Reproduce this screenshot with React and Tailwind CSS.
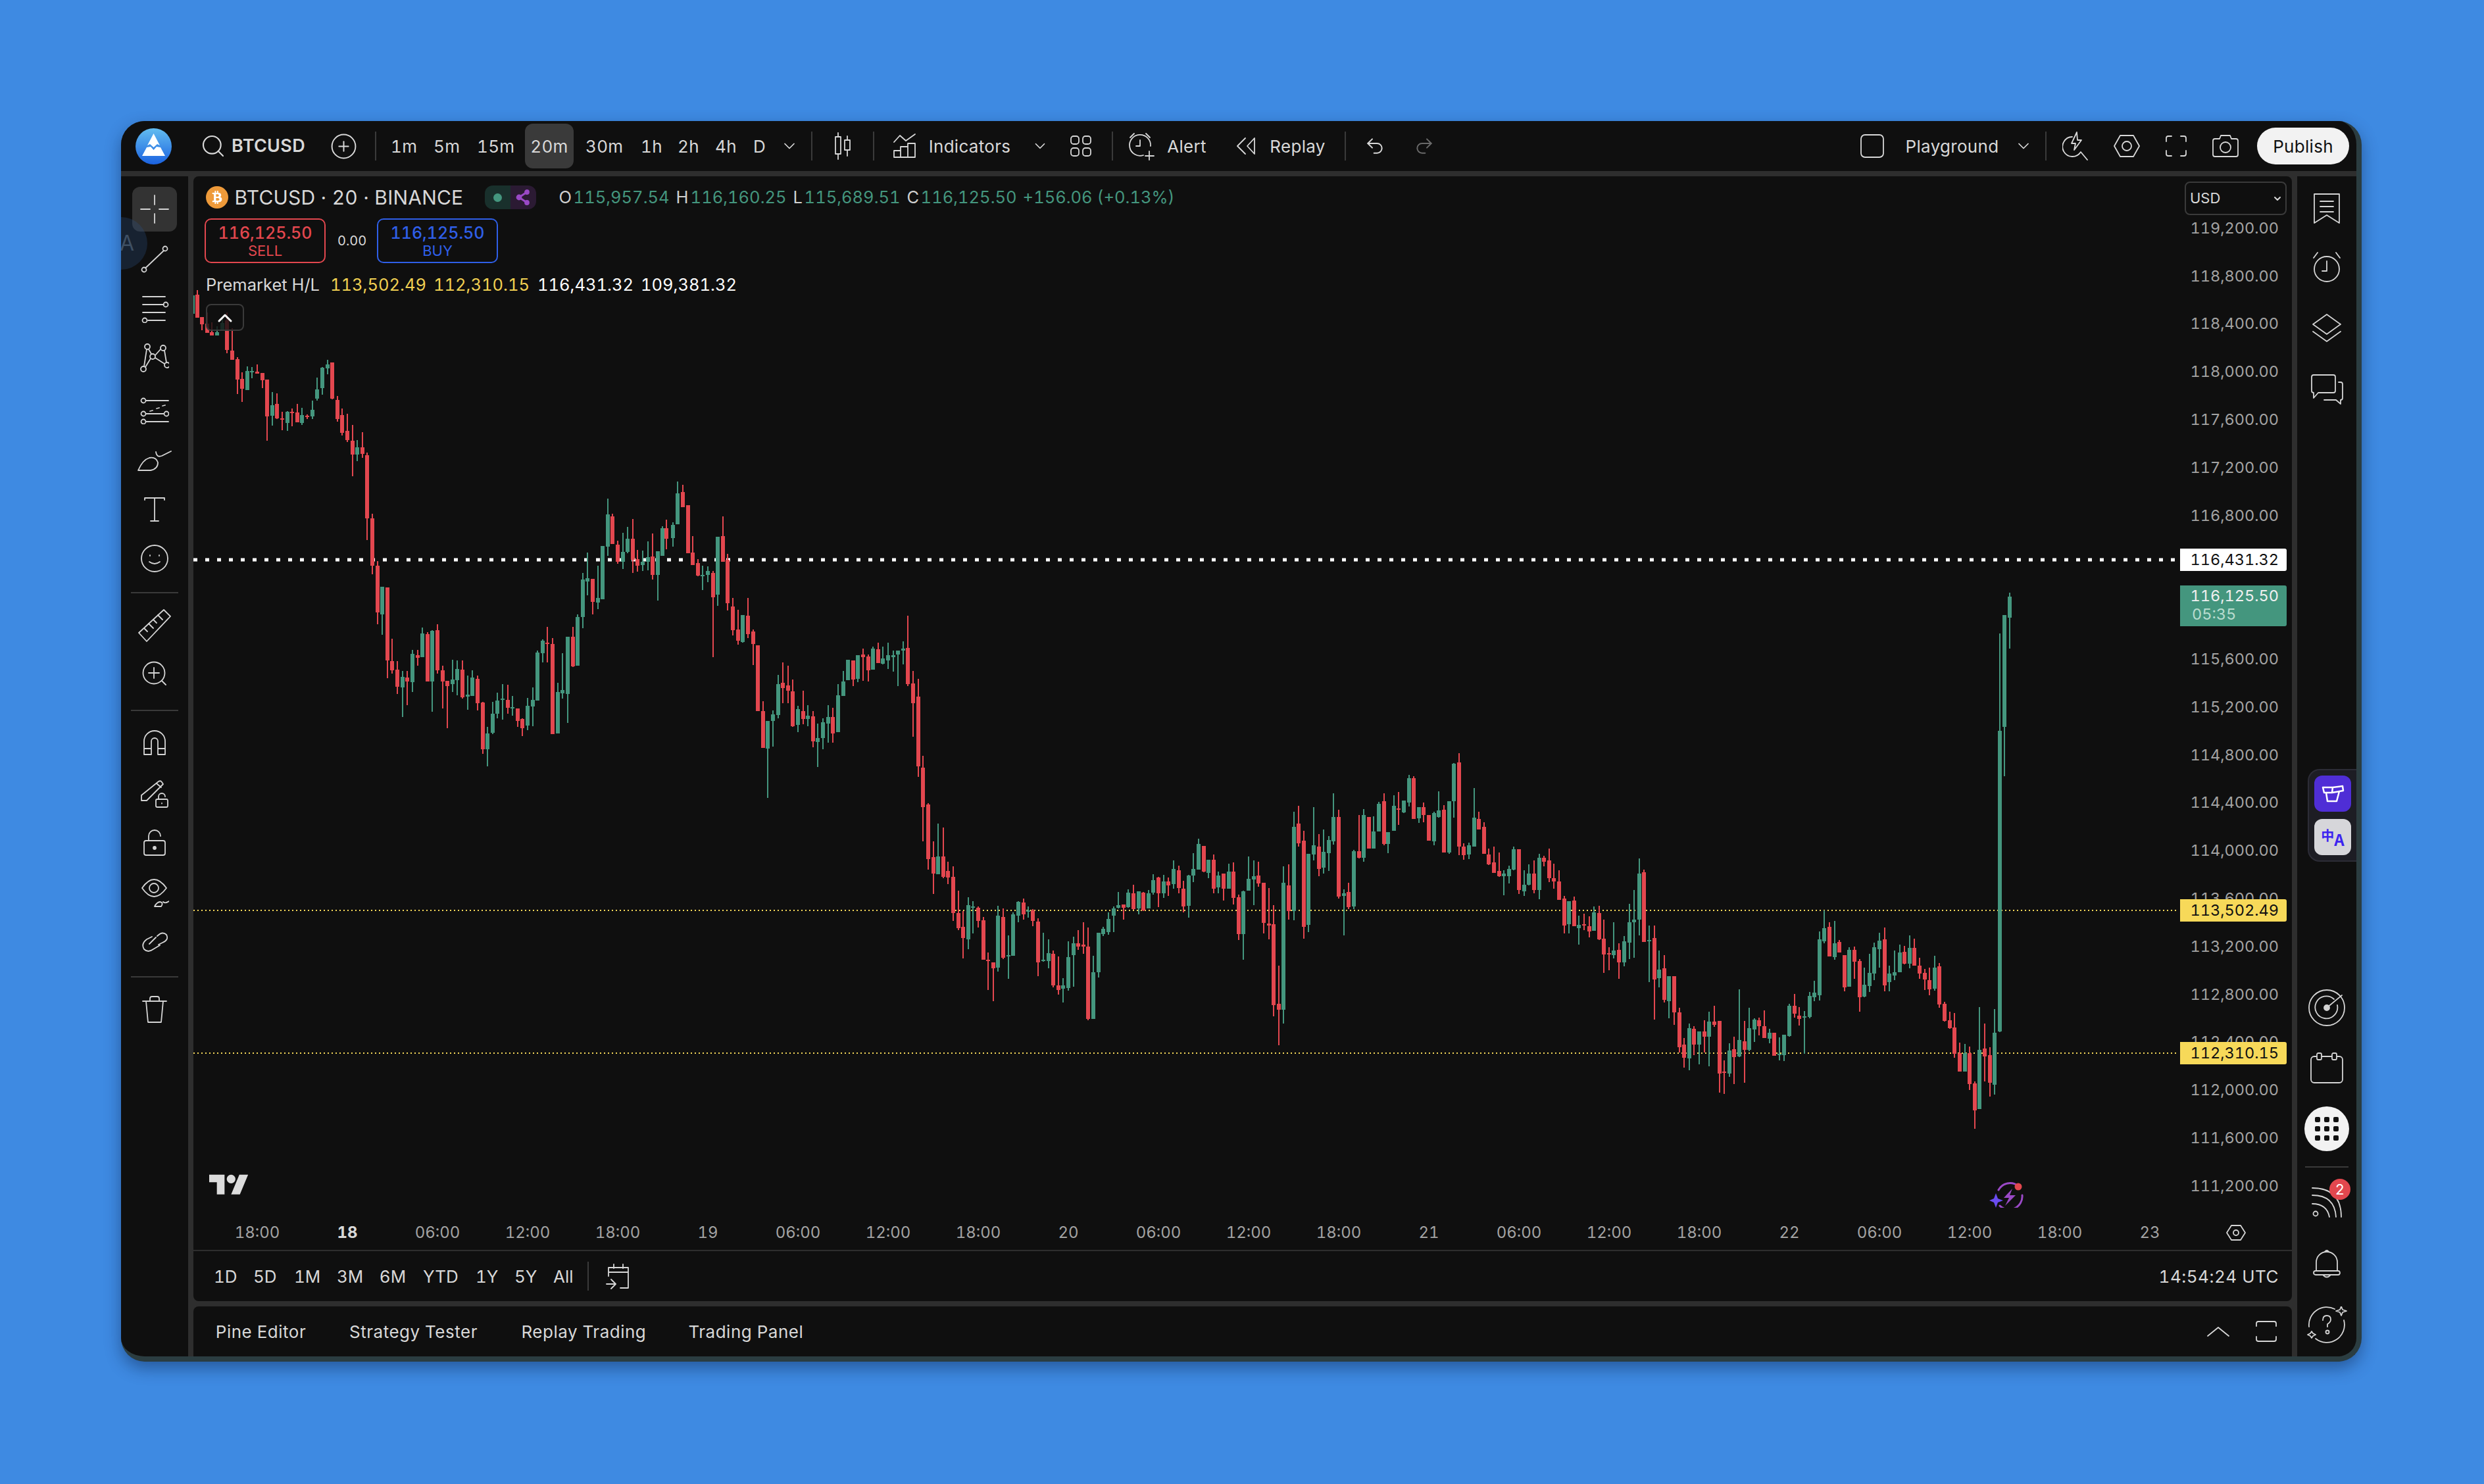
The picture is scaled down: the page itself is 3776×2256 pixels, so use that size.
import React from 'react';
import { FaBtc } from 'react-icons/fa';
import { Search, CirclePlus, Undo2, Redo2, ChevronDown } from 'lucide-react';

// candle readings: [x, green, bodyTop, bodyBottom, high, low], in the units of each crop
const segments = [
  { x0: 294, y0: 440, sx: 2.178, sy: 2.119, rows: [
    [-3,1,20,78,15,78],[13,0,18,91,3,91],[28,0,89,112,89,131],[45,0,110,139,75,140],[61,0,138,148,105,148],[78,1,137,148,118,148],[95,1,108,130,95,130],[111,0,100,195,75,206],[128,0,197,227,125,227],[145,0,225,290,218,337],[161,0,288,320,267,362],[178,1,263,324,247,324],[194,1,262,265,251,286],[211,0,264,271,242,271],[228,0,269,292,269,318],[244,0,290,409,290,487],[261,1,373,407,331,439],[276,0,369,416,335,417],[294,0,416,419,394,453],[311,1,395,430,391,456],[326,0,394,397,384,441],[344,0,396,428,369,428],[360,1,405,431,381,436],[377,0,406,409,403,417],[394,1,388,409,358,417],[410,1,322,352,284,358],[427,1,252,318,250,339],[444,1,242,254,227,273],[460,0,235,352,235,354],[476,0,356,417,343,426],[492,0,405,462,384,470],[509,0,456,485,400,492],[527,0,487,531,436,602],[542,1,509,531,486,553],[559,0,509,530,460,542],[575,0,534,737,525,807],[592,0,737,890,723,917],[609,0,890,1040,876,1079],[625,1,958,1047,958,1112],[642,0,960,1195,960,1252],[658,0,1197,1227,1125,1237],[675,0,1225,1280,1197,1303],[692,1,1248,1282,1228,1377],[707,0,1250,1263,1228,1339],[725,1,1174,1265,1162,1297],[742,0,1178,1187,1162,1212],[758,1,1108,1184,1090,1184],[775,0,1110,1263,1105,1263],[791,1,1100,1263,1098,1360],[807,0,1098,1227,1079,1237],[825,0,1227,1263,1212,1350],[840,0,1261,1278,1261,1413],[858,1,1257,1272,1193,1297],[874,1,1223,1259,1195,1308],[890,0,1225,1314,1195,1317],[908,1,1305,1311,1244,1354],[923,1,1250,1309,1226,1309],[940,0,1254,1333,1244,1356],[958,0,1331,1481,1329,1496],[973,1,1430,1481,1410,1536],[990,1,1367,1428,1329,1432],[1006,1,1324,1366,1300,1382],[1023,1,1318,1322,1272,1386],[1041,0,1322,1348,1273,1367],[1056,1,1346,1350,1310,1373],[1073,0,1350,1390,1350,1409],[1089,0,1384,1413,1382,1439],[1106,1,1341,1405,1315,1420],[1123,1,1322,1343,1283,1406],[1139,1,1170,1324,1164,1324],[1156,1,1132,1172,1127,1201],[1171,0,1138,1143,1088,1201],[1189,0,1142,1432,1123,1432],[1206,1,1297,1430,1268,1430],[1221,1,1290,1301,1171,1318],[1239,1,1119,1303,1119,1397],[1256,0,1119,1214,1086,1216],[1271,1,1055,1212,1046,1212],[1289,1,934,1055,913,1091],[1304,1,930,941,848,985],[1322,0,932,1006,932,1047],[1339,1,994,1009,890,1030],[1354,1,826,998,826,998],[1372,1,725,828,674,858],[1387,0,731,820,723,820],[1404,0,822,877,809,884],[1422,1,845,877,784,901],[1437,1,803,845,766,850],[1454,0,803,870,740,913],[1470,0,869,890,839,909],[1487,1,877,887,841,907],[1504,1,862,877,812,905],[1520,0,860,920,786,934],[1537,1,843,920,843,1002],[1554,1,769,858,762,858],
  ] },
  { x0: 1014, y0: 720, sx: 2.178, sy: 1.823, rows: [
    [-2,0,151,180,128,210],[19,1,142,179,135,202],[35,1,55,140,22,140],[52,0,51,93,31,93],[69,0,88,221,88,221],[85,0,219,253,173,253],[102,0,248,283,237,284],[118,1,281,284,255,323],[135,1,270,281,257,301],[152,0,275,343,270,509],[168,1,175,335,175,366],[185,0,173,244,119,244],[201,0,238,359,222,379],[218,0,368,434,344,449],[235,0,432,463,377,474],[251,1,392,467,392,468],[268,0,394,445,344,456],[285,0,438,472,432,531],[301,0,476,658,476,658],[318,0,658,760,631,760],[333,1,686,762,686,899],[351,1,667,686,656,757],[368,1,583,669,558,678],[383,0,580,594,523,636],[400,0,587,602,532,636],[416,0,603,700,570,702],[433,1,653,696,644,717],[451,0,658,680,602,695],[466,1,671,680,642,700],[483,0,673,742,658,758],[499,1,733,744,693,813],[516,1,689,733,678,764],[533,1,675,693,642,746],[549,0,675,720,649,746],[566,1,614,717,583,717],[583,1,576,616,547,616],[598,1,516,573,516,573],[616,0,518,571,518,589],[631,1,503,569,503,578],[649,0,501,509,485,574],[666,0,507,545,501,576],[681,1,485,543,480,543],[699,0,487,525,469,525],[714,1,512,527,480,529],[731,1,503,518,469,542],[749,1,503,509,490,549],[764,1,490,501,490,589],[781,1,485,491,465,529],[797,0,483,583,394,589],[814,0,582,636,547,729],[831,0,618,811,569,841],[847,0,815,924,782,1019],[864,0,917,1068,913,1098],[882,0,1063,1109,1019,1165],[897,1,1061,1110,970,1110],[914,0,1061,1117,981,1121],[929,0,1101,1119,1075,1138],[947,0,1118,1218,1089,1240],[964,0,1218,1260,1156,1265],[980,0,1256,1287,1212,1344],[997,1,1196,1291,1174,1318],[1012,1,1200,1203,1185,1274],[1030,0,1203,1240,1200,1258],[1047,0,1238,1347,1229,1347],[1063,0,1347,1351,1327,1431],[1080,0,1355,1371,1355,1462],[1095,1,1225,1369,1198,1380],[1112,0,1229,1342,1205,1346],[1130,1,1334,1338,1280,1400],[1145,1,1222,1336,1216,1336],[1162,1,1187,1225,1185,1243],[1180,0,1189,1222,1178,1236],[1195,1,1211,1215,1200,1231],[1212,0,1211,1240,1207,1254],[1228,0,1242,1355,1233,1393],[1245,1,1347,1351,1273,1353],[1263,1,1329,1351,1291,1371],[1278,0,1331,1418,1322,1424],[1295,0,1418,1431,1338,1444],[1311,1,1418,1427,1398,1466],[1328,1,1340,1426,1296,1433],[1345,1,1302,1335,1284,1422],[1361,0,1302,1311,1265,1320],[1378,0,1305,1311,1244,1331],[1393,0,1311,1511,1258,1515],[1411,1,1382,1511,1336,1511],[1428,1,1273,1382,1273,1397],[1443,1,1262,1276,1256,1282],[1461,1,1234,1271,1216,1278],[1478,1,1205,1225,1199,1271],[1494,1,1196,1203,1160,1205],[1511,0,1194,1203,1194,1236],[1526,1,1161,1202,1152,1203],[1544,0,1163,1207,1140,1209],[1561,1,1158,1205,1158,1222],
  ] },
  { x0: 1734, y0: 1120, sx: 2.178, sy: 3, rows: [
    [8,0,711,792,708,794],[26,1,714,783,699,783],[41,1,654,711,627,720],[59,0,642,714,639,777],[76,1,660,714,630,735],[91,0,660,678,642,726],[108,1,603,672,564,693],[126,0,609,690,588,714],[141,0,693,774,657,801],[159,1,633,771,630,825],[174,1,603,633,531,663],[191,1,489,606,465,606],[209,0,498,615,498,618],[224,1,561,621,561,645],[241,0,561,693,537,714],[257,1,633,687,615,714],[274,0,624,693,624,747],[291,1,615,693,579,693],[307,0,615,735,573,765],[324,0,732,900,720,927],[340,1,705,900,702,1017],[357,1,648,702,546,702],[374,1,636,651,564,768],[389,0,633,669,570,684],[407,0,666,849,666,897],[424,0,852,861,690,924],[439,0,855,1224,768,1275],[457,0,1218,1245,1044,1407],[472,1,666,1245,591,1308],[490,0,678,795,582,834],[507,1,411,795,342,837],[522,0,396,486,315,501],[540,0,474,867,429,921],[555,1,534,858,534,891],[572,1,495,537,321,564],[590,0,501,603,444,636],[605,1,525,597,423,624],[622,1,471,531,453,612],[638,1,366,477,258,492],[655,0,366,729,333,738],[672,1,714,726,696,906],[688,0,708,777,666,786],[705,1,522,774,516,786],[723,0,522,552,357,555],[738,1,357,552,330,570],[755,0,366,510,366,510],[770,1,432,510,363,510],[788,1,306,432,297,432],[805,0,294,489,258,495],[820,1,435,489,435,531],[838,1,315,429,267,429],[853,0,327,333,252,402],[871,1,291,345,291,348],[888,1,189,300,174,318],[903,0,189,375,180,375],[921,1,321,372,321,393],[936,0,321,357,300,390],[953,0,357,474,357,474],[971,1,348,477,342,495],[986,1,336,366,249,369],[1003,0,333,528,312,528],[1021,1,294,528,294,534],[1036,1,123,294,120,369],[1054,0,117,501,75,540],[1069,0,501,540,486,561],[1086,1,495,537,483,558],[1104,1,369,501,234,501],[1119,0,375,423,342,423],[1136,0,411,534,390,534],[1152,0,537,582,510,585],[1169,0,573,621,501,621],[1186,0,612,636,528,639],[1202,1,624,636,609,723],[1219,1,603,636,588,669],[1234,1,513,606,501,609],[1252,0,513,699,513,717],[1269,1,675,705,609,726],[1285,1,624,675,582,678],[1302,0,624,699,564,714],[1319,1,552,699,534,741],[1335,0,552,570,543,591],[1352,0,564,645,510,663],[1367,0,645,660,579,693],[1385,0,660,744,609,744],[1402,0,738,861,726,897],[1417,1,750,855,750,897],[1435,0,747,864,729,864],[1450,1,858,873,816,948],[1468,0,855,861,807,882],[1485,0,864,888,819,915],[1500,1,801,885,774,885],[1518,0,804,924,771,927],[1533,0,921,993,834,1077],[1550,0,987,993,960,1065],[1566,1,975,995,846,1011],
  ] },
  { x0: 2454, y0: 880, sx: 2.45, sy: 1.823, rows: [
    [17,0,1028,1063,1010,1109],[36,1,1005,1063,990,1074],[56,1,952,1008,901,1054],[73,1,945,951,862,1050],[93,1,817,944,775,988],[110,0,813,1006,806,1006],[129,1,1001,1004,961,1118],[149,0,995,1110,961,1222],[166,1,1083,1107,1030,1132],[186,0,1079,1167,1043,1174],[203,1,1101,1171,1101,1218],[223,0,1101,1202,1101,1236],[242,0,1202,1298,1189,1313],[259,0,1291,1327,1273,1355],[279,1,1245,1329,1233,1362],[296,0,1247,1291,1240,1320],[316,1,1254,1291,1254,1346],[335,0,1254,1269,1223,1312],[352,1,1227,1269,1200,1351],[372,0,1227,1236,1183,1241],[392,0,1225,1371,1225,1424],[409,0,1366,1369,1335,1427],[428,1,1307,1371,1287,1380],[445,0,1304,1326,1269,1400],[465,1,1278,1324,1138,1326],[485,0,1282,1305,1225,1397],[502,1,1245,1305,1189,1309],[521,1,1222,1249,1218,1284],[539,0,1223,1240,1216,1265],[558,0,1240,1273,1196,1273],[578,1,1258,1274,1247,1287],[596,0,1258,1322,1258,1322],[614,1,1316,1320,1271,1335],[632,1,1264,1320,1264,1336],[651,1,1183,1267,1178,1269],[671,0,1183,1205,1150,1216],[688,0,1211,1220,1187,1238],[708,1,1212,1216,1198,1316],[727,1,1156,1215,1145,1218],[744,1,1147,1160,1114,1171],[764,1,999,1154,977,1169],[781,1,968,1005,918,1010],[801,0,965,1047,952,1047],[820,1,1010,1049,948,1056],[838,0,1006,1035,1001,1036],[857,0,1043,1132,1043,1143],[875,1,1028,1130,1021,1130],[894,0,1028,1061,1019,1109],[913,0,1060,1160,1054,1200],[931,1,1125,1157,1078,1160],[950,1,1092,1129,1039,1145],[967,1,1021,1094,1008,1112],[987,1,1003,1027,981,1078],[1006,0,999,1127,966,1143],[1024,1,1094,1118,1072,1143],[1043,1,1090,1100,1030,1112],[1063,1,1036,1090,1014,1090],[1080,0,1034,1067,1017,1069],[1100,1,1023,1067,988,1079],[1117,0,1023,1072,997,1072],[1136,0,1072,1094,1050,1109],[1156,0,1092,1110,1081,1140],[1173,0,1112,1138,1078,1154],[1193,1,1078,1136,1045,1141],[1210,0,1074,1180,1065,1189],[1230,0,1178,1225,1172,1227],[1249,0,1223,1245,1200,1247],[1266,0,1243,1316,1203,1327],[1286,0,1314,1366,1285,1366],[1305,1,1314,1366,1289,1366],[1323,0,1314,1400,1296,1417],[1342,0,1398,1473,1393,1524],[1359,1,1305,1470,1187,1470],[1379,0,1302,1324,1233,1393],[1399,0,1320,1397,1298,1435],[1416,1,1258,1402,1192,1429],[1435,1,421,1254,151,1256],[1452,1,100,410,100,547],[1472,1,49,108,38,193],
  ] },
];

const candles = segments.flatMap((s) =>
  s.rows.map(([cx, up, top, bot, hi, lo]) => ({
    x: Math.round(s.x0 + cx / s.sx),
    up,
    top: s.y0 + top / s.sy,
    bot: s.y0 + bot / s.sy,
    hi: s.y0 + hi / s.sy,
    lo: s.y0 + lo / s.sy,
  }))
);

const prices = ['119,200.00','118,800.00','118,400.00','118,000.00','117,600.00','117,200.00','116,800.00','116,400.00','116,000.00','115,600.00','115,200.00','114,800.00','114,400.00','114,000.00','113,600.00','113,200.00','112,800.00','112,400.00','112,000.00','111,600.00','111,200.00'];
const times = ['18:00','18','06:00','12:00','18:00','19','06:00','12:00','18:00','20','06:00','12:00','18:00','21','06:00','12:00','18:00','22','06:00','12:00','18:00','23'];

const Ico = ({ w = 44, h = 44, sw = 1.8, className = '', children }) => (
  <svg width={w} height={h} viewBox={`0 0 ${w} ${h}`} fill="none" stroke="currentColor" strokeWidth={sw} strokeLinecap="round" strokeLinejoin="round" className={`shrink-0 ${className}`}>
    {children}
  </svg>
);

const Sep = ({ className = '' }) => <div className={`h-[44px] w-[2px] shrink-0 bg-[#3a3a3a] ${className}`} />;
const Divider = ({ className }) => <div className={`h-[2px] w-[72px] bg-[#3a3a3a] ${className}`} />;

const Logo = () => (
  <svg width="55" height="55" viewBox="0 0 55 55" className="ml-[22px] shrink-0">
    <defs>
      <linearGradient id="logoFill" x1="0" y1="0" x2="0" y2="1">
        <stop offset="0" stopColor="#63bdf0" />
        <stop offset="1" stopColor="#1b62e0" />
      </linearGradient>
    </defs>
    <circle cx="27.5" cy="27.5" r="27.5" fill="url(#logoFill)" />
    <path d="M27.5 8 L37 26 L33 24 L27.5 29 L22 24 L18 26 Z" fill="#fff" />
    <path d="M17 29 L23 28 L27.5 33 L32 28 L38 29 L45 42 L10 42 Z" fill="#fff" />
  </svg>
);

const TopBar = () => (
  <div className="flex h-[76px] shrink-0 items-center whitespace-nowrap bg-[#0f0f0f] text-[26px] tracking-[0.3px] text-[#d8d8d8]">
    <Logo />
    <Search size={40} strokeWidth={1.3} className="ml-[43px] shrink-0" />
    <span className="ml-[7px] w-[114px] shrink-0 text-center text-[27px] font-semibold">BTCUSD</span>
    <CirclePlus size={43} strokeWidth={1.1} className="ml-[36px] shrink-0" />
    <Sep className="ml-[26px]" />
    <span className="ml-[22px] w-[39px] shrink-0 text-center">1m</span>
    <span className="ml-[26px] w-[39px] shrink-0 text-center">5m</span>
    <span className="ml-[27px] w-[57px] shrink-0 text-center">15m</span>
    <span className="ml-[16px] flex h-[68px] w-[74px] shrink-0 items-center justify-center rounded-[12px] bg-[#3a3a3a]">20m</span>
    <span className="ml-[18px] w-[57px] shrink-0 text-center">30m</span>
    <span className="ml-[27px] w-[30px] shrink-0 text-center">1h</span>
    <span className="ml-[26px] w-[31px] shrink-0 text-center">2h</span>
    <span className="ml-[26px] w-[32px] shrink-0 text-center">4h</span>
    <span className="ml-[26px] w-[18px] shrink-0 text-center">D</span>
    <ChevronDown size={28} strokeWidth={1.5} className="ml-[22.5px] shrink-0" />
    <Sep className="ml-[19.5px]" />
    <Ico w={30} h={42} className="ml-[31px]">
      <path d="M8 1V41M22 6V36" />
      <rect x="4" y="7" width="8" height="26" fill="#0f0f0f" />
      <rect x="18" y="12" width="8" height="15" fill="#0f0f0f" />
    </Ico>
    <Sep className="ml-[31px]" />
    <Ico w={36} h={38} className="ml-[28px]">
      <path d="M2 13 L11 3 L20 11 L34 1" />
      <path d="M2 36H34M2 36V26H12V36M12 36V20H23V36M23 36V15H34V36" />
    </Ico>
    <span className="ml-[18px] w-[126px] shrink-0 text-center">Indicators</span>
    <ChevronDown size={26} strokeWidth={1.6} className="ml-[31px] shrink-0" />
    <Ico w={34} h={34} className="ml-[32px]">
      <rect x="2" y="2" width="12" height="12" rx="4" />
      <rect x="20" y="2" width="12" height="12" rx="4" />
      <rect x="2" y="20" width="12" height="12" rx="4" />
      <rect x="20" y="20" width="12" height="12" rx="4" />
    </Ico>
    <Sep className="ml-[30px]" />
    <Ico w={44} h={44} className="ml-[22px]">
      <path d="M24 36 A16 16 0 1 1 35 22" />
      <path d="M19 13V22H13M4 9L10 3M34 9L28 3M33 30V43M27 37H40" />
    </Ico>
    <span className="ml-[16px] w-[60px] shrink-0 text-center">Alert</span>
    <Ico w={32} h={30} className="ml-[44px]">
      <path d="M15 3 L3 15 L15 27" />
      <path d="M29 3 L18 15 L29 27 Z" />
    </Ico>
    <span className="ml-[20px] w-[85px] shrink-0 text-center">Replay</span>
    <Sep className="ml-[29px]" />
    <Undo2 size={32} strokeWidth={1.5} className="ml-[28px] shrink-0" />
    <Redo2 size={32} strokeWidth={1.5} className="ml-[43px] shrink-0 text-[#6a6a6a]" />
    <Ico w={38} h={38} className="ml-[646px]">
      <rect x="2" y="2" width="34" height="34" rx="6" />
    </Ico>
    <span className="ml-[31px] w-[143px] shrink-0 text-center">Playground</span>
    <ChevronDown size={28} strokeWidth={1.5} className="ml-[23px] shrink-0" />
    <Sep className="ml-[19px]" />
    <Ico w={40} h={44} className="ml-[24px]">
      <path d="M15 8 A15 15 0 1 0 28 31 L38 43" />
      <path d="M22 1 L14 18 H20 L18 28 L29 13 H23 Z" />
    </Ico>
    <Ico w={42} h={36} className="ml-[37px]">
      <path d="M11 2H31L40 18L31 34H11L2 18Z" />
      <circle cx="21" cy="18" r="7" />
    </Ico>
    <Ico w={34} h={34} className="ml-[37px]">
      <path d="M2 10V5Q2 2 5 2H10M24 2H29Q32 2 32 5V10M32 24V29Q32 32 29 32H24M10 32H5Q2 32 2 29V24" />
    </Ico>
    <Ico w={42} h={36} className="ml-[37px]">
      <path d="M5 7H12L14 2H28L30 7H37Q40 7 40 10V31Q40 34 37 34H5Q2 34 2 31V10Q2 7 5 7Z" />
      <circle cx="21" cy="20" r="8" />
    </Ico>
    <span className="ml-[27px] flex h-[56px] w-[140px] shrink-0 items-center justify-center rounded-full bg-[#f2f2f2] text-[#111]">Publish</span>
  </div>
);

const LeftRail = () => (
  <div className="relative flex w-[102px] shrink-0 flex-col items-center overflow-hidden bg-[#0f0f0f] text-[#d4d4d4]">
    <div className="mt-[16px] flex h-[68px] w-[68px] items-center justify-center rounded-[12px] bg-[#333333]">
      <Ico>
        <path d="M22 1V15M22 29V43M1 22H15M29 22H43" />
      </Ico>
    </div>
    <Ico className="mt-[20px]">
      <circle cx="38" cy="6" r="3.5" /><circle cx="6" cy="38" r="3.5" /><path d="M36 9L8 35.5" />
    </Ico>
    <Ico className="mt-[31px]">
      <path d="M4 4H38M4 16H36M4 28H38M12 40H38" />
      <circle cx="39" cy="16" r="3.5" /><circle cx="7" cy="40" r="3.5" />
    </Ico>
    <Ico className="mt-[31px]">
      <circle cx="11" cy="5" r="4" /><circle cx="35" cy="7" r="4" /><circle cx="5" cy="39" r="4" /><circle cx="41" cy="33" r="4" /><circle cx="19" cy="20" r="4" />
      <path d="M13 9L17 16M31 9L23 18M10 9L6 35M37 11L40 29M23 22L37 31M16 23L8 36" />
    </Ico>
    <Ico className="mt-[35px]">
      <circle cx="5" cy="8" r="3.5" /><circle cx="5" cy="28" r="3.5" /><circle cx="5" cy="40" r="3.5" /><circle cx="40" cy="28" r="3.5" />
      <path d="M9 8H43M9 28H36M9 40H43" />
      <path d="M15 24L19 23M25 20L29 19M34 16L38 15" />
    </Ico>
    <Ico w={52} h={38} className="mt-[34px]">
      <path d="M1 36H20Q31 34 31 24Q28 15 18 17Q8 20 1 36Z" />
      <path d="M28 8Q29 17 37 14L51 7" />
    </Ico>
    <Ico className="mt-[35px]">
      <path d="M7 8V5H37V8M22 5V40M16 40H28" />
    </Ico>
    <Ico className="mt-[31px]">
      <circle cx="22" cy="22" r="20" />
      <path d="M14 27Q22 33 30 27M15 17V18M29 17V18" />
    </Ico>
    <Divider className="mt-[29px]" />
    <Ico w={50} h={50} className="mt-[24px]">
      <path d="M1 36L39 1L49 11L13 49Z" />
      <path d="M9 29L14 34M16 22L23 29M23 16L28 21M30 9L37 16" />
    </Ico>
    <Ico className="mt-[27px]">
      <circle cx="21" cy="20" r="16.5" />
      <path d="M13 20H29M21 12V28M33 32L39 38" />
    </Ico>
    <Divider className="mt-[32px]" />
    <Ico className="mt-[26px]">
      <path d="M6 40V20A16 16 0 0 1 38 20V40H27V20A5 5 0 0 0 17 20V40ZM6 31H17M27 31H38" />
    </Ico>
    <Ico className="mt-[34px]">
      <path d="M2 24L28 3Q31 1 33 4L35 7L10 32H2ZM2 24V32M25 6L32 12" />
      <rect x="24" y="30" width="18" height="12" rx="2" />
      <path d="M28 30V26A5 5 0 0 1 38 26M33 36V36.5" />
    </Ico>
    <Ico className="mt-[31px]">
      <rect x="6" y="18" width="32" height="22" rx="3" />
      <path d="M13 18V11A9 9 0 0 1 31 11" />
      <circle cx="22" cy="29" r="2" fill="currentColor" />
    </Ico>
    <Ico className="mt-[32px]">
      <path d="M3 14Q21 -12 40 14Q21 40 3 14Z" />
      <circle cx="21" cy="14" r="7" />
      <path d="M22 42H32Q36 36 30 35Q25 36 22 42ZM35 35Q38 38 44 34" />
    </Ico>
    <Ico className="mt-[31px]">
      <path d="M18 13L10 17Q1 24 6 32Q12 38 20 32L30 26M24 14L14 24M26 12Q34 4 40 10Q44 18 34 22L28 25" />
    </Ico>
    <Divider className="mt-[29px]" />
    <Ico className="mt-[27px]">
      <path d="M4 9H40M9 9L12 41H32L35 9M15 9V5Q15 2 18 2H26Q29 2 29 5V9" />
    </Ico>
    <div className="absolute left-[-40px] top-[62px] flex h-[80px] w-[80px] items-center justify-end rounded-full bg-[#2a5080]/30 pr-[20px] text-[32px] text-[#3e4f63]">A</div>
  </div>
);

const RightRail = () => (
  <div className="flex w-[90px] shrink-0 flex-col items-center bg-[#0f0f0f] text-[#d4d4d4]">
    <Ico w={48} h={48} className="mt-[25px]">
      <path d="M5 2H43V46L24 34L5 46ZM14 13H34M14 21H34M14 29H34" />
    </Ico>
    <Ico w={52} h={48} className="mt-[41px]">
      <circle cx="26" cy="27" r="19" />
      <path d="M26 15V30H19M6 10L12 2M46 10L40 2" />
    </Ico>
    <Ico w={48} h={48} className="mt-[45px]">
      <path d="M24 3L45 18L24 33L3 18Z" />
      <path d="M3 29L24 44L45 29" />
    </Ico>
    <Ico w={52} h={48} className="mt-[45px]">
      <path d="M3 5Q3 2 6 2H36Q39 2 39 5V26Q39 29 36 29H13L6 37V29Q3 29 3 26Z" />
      <path d="M44 13H47Q50 13 50 16V37Q50 40 47 40V46L40 40H22" />
    </Ico>
    <div className="mt-[553px] flex h-[141px] w-[74px] flex-col gap-[11px] self-end rounded-l-[18px] border-y-2 border-l-2 border-[#2c2c36] bg-[#1d1d24] py-[8px] pl-[8px] pr-[8px]">
      <div className="flex h-[56px] w-[56px] items-center justify-center rounded-[12px] bg-[#4f2ed6] text-white">
        <Ico w={36} h={30} sw={2.5}>
          <path d="M3 5H18L17 13H5ZM18 5L33 3L34 10L17 13M8 13L10 26H24L28 11" />
        </Ico>
      </div>
      <div className="flex h-[56px] w-[56px] items-center justify-center rounded-[12px] bg-[#d6d6da] font-['Noto_Sans_CJK_SC',sans-serif] font-bold leading-none text-[#3d24f0]">
        <span className="mb-[6px] text-[20px]">中</span><span className="mt-[6px] text-[24px]">A</span>
      </div>
    </div>
    <Ico w={58} h={58} className="mt-[192.5px]">
      <circle cx="29" cy="29" r="27" />
      <path d="M40 16A17 17 0 1 0 45 25" />
      <circle cx="29" cy="29" r="4" fill="currentColor" />
      <path d="M29 29L52 10" />
    </Ico>
    <Ico w={52} h={48} className="mt-[39.5px]">
      <rect x="2" y="6" width="48" height="40" rx="5" />
      <rect x="11" y="1" width="7" height="10" rx="2" fill="#0f0f0f" />
      <rect x="34" y="1" width="7" height="10" rx="2" fill="#0f0f0f" />
    </Ico>
    <div className="mt-[34px] flex h-[68px] w-[68px] items-center justify-center rounded-full bg-[#f2f2f2]">
      <div className="grid grid-cols-3 gap-[6px]">
        {Array.from({ length: 9 }).map((_, i) => (
          <div key={i} className="h-[8px] w-[8px] rounded-[2px] bg-[#111]" />
        ))}
      </div>
    </div>
    <div className="mt-[23px] h-[2px] w-[66px] bg-[#3a3a3a]" />
    <div className="relative mt-[28px] h-[48px] w-[48px]">
      <Ico w={48} h={48}>
        <circle cx="7" cy="42" r="3.5" />
        <path d="M2 27Q24 27 28 47M2 14Q36 14 38 47M2 3Q46 3 46 47" />
      </Ico>
      <span className="absolute left-[28px] top-[-11px] flex h-[32px] w-[32px] items-center justify-center rounded-full bg-[#e2474e] text-[22px] text-white">2</span>
    </div>
    <Ico w={44} h={48} className="mt-[47px]">
      <path d="M6 34V21A16 16 0 0 1 38 21V34" />
      <path d="M19 5Q22 1 25 5" />
      <rect x="2" y="34" width="40" height="6" rx="3" />
      <path d="M17 41Q22 46 27 41" />
    </Ico>
    <Ico w={62} h={56} className="mt-[40px]">
      <path d="M43 4A27 27 0 0 0 4 31M14 49A27 27 0 0 0 57 21" />
      <path d="M25 21Q25 14 31 14Q37 14 37 20Q37 24 32 27V31" />
      <circle cx="32" cy="39" r="2.5" />
      <path d="M53 0L55 5L61 7L55 9L53 14L51 9L45 7L51 5Z" />
      <path d="M8 38L10 41L14 43L10 45L8 48L6 45L2 43L6 41Z" />
    </Ico>
  </div>
);

const ChartCanvas = () => (
  <svg className="absolute left-0 top-0" width="3190" height="1568" viewBox="294 268 3190 1568" fill="none">
    <path d="M294 851H3312" stroke="#fff" strokeWidth="5" strokeDasharray="6 12" />
    <path d="M294 1384H3312M294 1601H3312" stroke="#f7d959" strokeWidth="2" strokeDasharray="2 4" />
    {candles.map((c, i) => {
      const color = c.up ? '#44967e' : '#e3474f';
      return (
        <g key={i} fill={color} shapeRendering="crispEdges">
          <rect x={c.x - 1} y={c.hi} width="2" height={Math.max(c.lo - c.hi, 2)} />
          <rect x={c.x - 3} y={c.top} width="6" height={Math.max(c.bot - c.top, 2)} />
        </g>
      );
    })}
    <path d="M14 22H7V11H0V4h14v18zM28 22h-8l7.5-18h8L28 22z" transform="translate(318 1779) scale(1.667)" fill="#dcdcdc" />
    <circle cx="351.3" cy="1792.3" r="6.6" fill="#dcdcdc" />
    <g transform="translate(3024 1797)">
      <path d="M14 12A20 20 0 0 1 44 6M50 20A20 20 0 0 1 16 36" stroke="#9a49c6" strokeWidth="3" strokeLinecap="round" />
      <path d="M35 10L22 24H30L24 36L40 20H31Z" fill="#9a49c6" />
      <path d="M10 17L13 25L21 28L13 31L10 39L7 31L0 28L7 25Z" fill="#6a4cf0" />
      <circle cx="44" cy="7" r="5.5" fill="#e2474e" />
    </g>
  </svg>
);

const Legend = () => (
  <div className="absolute left-[19px] top-[14px] flex flex-col whitespace-nowrap text-[25.5px] leading-[36px] text-[#d8d8d8]">
    <div className="flex h-[36px] items-center">
      <span className="flex h-[34px] w-[34px] shrink-0 items-center justify-center rounded-full bg-[#ee9a3a] text-white"><FaBtc size={20} /></span>
      <span className="ml-[9.6px] w-[348px] shrink-0 text-[30px] tracking-[0.2px]">BTCUSD · 20 · BINANCE</span>
      <div className="ml-[32px] flex h-[36px] w-[78px] shrink-0 overflow-hidden rounded-[12px]">
        <div className="flex flex-1 items-center justify-center bg-[#19302c]"><span className="h-[13px] w-[13px] rounded-full bg-[#44967e]" /></div>
        <div className="flex flex-1 items-center justify-center bg-[#2b1a33] text-[#9a49c6]">
          <Ico w={24} h={26}>
            <circle cx="18" cy="5" r="3" fill="currentColor" /><circle cx="18" cy="21" r="3" fill="currentColor" /><circle cx="6" cy="13" r="3.5" fill="currentColor" />
            <path d="M18 5L6 13L18 21" strokeWidth="3" />
          </Ico>
        </div>
      </div>
      <div className="ml-[35px] flex text-[#44967e]">
        <span className="w-[22px] text-[#d0d0d0]">O</span><span className="w-[142px]">115,957.54</span>
        <span className="ml-[14px] w-[22px] text-[#d0d0d0]">H</span><span className="w-[142px]">116,160.25</span>
        <span className="ml-[14px] w-[17px] text-[#d0d0d0]">L</span><span className="w-[142px]">115,689.51</span>
        <span className="ml-[14px] w-[21px] text-[#d0d0d0]">C</span><span className="w-[142px]">116,125.50</span>
        <span className="ml-[13px] w-[229px]">+156.06 (+0.13%)</span>
      </div>
    </div>
    <div className="ml-[-2px] mt-[14px] flex items-center">
      <div className="flex h-[68px] w-[184px] flex-col items-center justify-center rounded-[10px] border-2 border-[#e2474e] text-[#e2474e]">
        <span className="text-[25px] font-medium leading-[30px]">116,125.50</span>
        <span className="text-[22px] leading-[24px]">SELL</span>
      </div>
      <span className="ml-[18px] w-[42px] text-center text-[20px]">0.00</span>
      <div className="ml-[18px] flex h-[68px] w-[184px] flex-col items-center justify-center rounded-[10px] border-2 border-[#2f5fe8] text-[#2f5fe8]">
        <span className="text-[25px] font-medium leading-[30px]">116,125.50</span>
        <span className="text-[22px] leading-[24px]">BUY</span>
      </div>
    </div>
    <div className="mt-[15px] flex h-[36px] items-center">
      <span className="w-[172px]">Premarket H/L</span>
      <span className="ml-[17px] w-[144px] text-[#f0cf52]">113,502.49</span>
      <span className="ml-[13px] w-[143px] text-[#f0cf52]">112,310.15</span>
      <span className="ml-[15px] w-[142px] text-white">116,431.32</span>
      <span className="ml-[15px] w-[142px] text-white">109,381.32</span>
    </div>
    <div className="mt-[11px] flex h-[41px] w-[58px] items-center justify-center rounded-[8px] border-2 border-[#3a3a3a] bg-[#0f0f0fcc] text-white">
      <Ico w={24} h={16} sw={3}><path d="M3 13L12 4L21 13" /></Ico>
    </div>
  </div>
);

const PriceAxis = () => (
  <div className="relative ml-auto w-[172px] pt-[42px]">
    {prices.map((p) => (
      <div key={p} className="flex h-[72.8px] items-center justify-end pr-[20px] text-[23.5px] text-[#a3a3a3]">{p}</div>
    ))}
    <div className="absolute left-[9px] top-[8px] flex h-[51px] w-[155px] items-center justify-between rounded-[8px] border-2 border-[#3a3a3a] bg-[#0f0f0f] pl-[6px] pr-[4px] text-[22px] text-[#d8d8d8]">
      USD <ChevronDown size={16} strokeWidth={3} />
    </div>
  </div>
);

const PriceTag = ({ top, className, children }) => (
  <div className={`absolute left-[-170px] w-[162px] rounded-r-[3px] pr-[12px] text-right text-[23.5px] ${className}`} style={{ top }}>{children}</div>
);

const Panel = () => (
  <div className="flex h-[1710px] flex-col overflow-hidden rounded-[8px] bg-[#0f0f0f]">
    <div className="relative flex h-[1568px] shrink-0">
      <ChartCanvas />
      <Legend />
      <PriceAxis />
      <div className="absolute right-0 top-0">
        <PriceTag top={566} className="bg-white leading-[34px] text-[#111]">116,431.32</PriceTag>
        <PriceTag top={622} className="h-[62px] bg-[#44967e] pt-[2px] leading-[28px] text-[#f0f0f0]">116,125.50<div className="pl-[18px] text-left text-[#b9dccf]">05:35</div></PriceTag>
        <PriceTag top={1099} className="bg-[#f7d959] leading-[34px] text-[#111]">113,502.49</PriceTag>
        <PriceTag top={1316} className="bg-[#f7d959] leading-[34px] text-[#111]">112,310.15</PriceTag>
      </div>
    </div>
    <div className="flex h-[64px] shrink-0 items-center pl-[28.5px] pt-[12px] text-[24px] text-[#a3a3a3]">
      {times.map((t, i) => (
        <span key={i} className={`w-[137px] shrink-0 text-center ${t === '18' ? 'font-bold text-[#d8d8d8]' : ''}`}>{t}</span>
      ))}
      <Ico w={32} h={26} className="ml-[46px] text-[#d4d4d4]">
        <path d="M9 2H23L30 13L23 24H9L2 13Z" /><circle cx="16" cy="13" r="4" />
      </Ico>
    </div>
    <div className="flex h-[78px] flex-1 items-center whitespace-nowrap border-t-2 border-[#2e2e2e] text-[26px] text-[#d8d8d8]">
      <span className="ml-[31px] w-[34px] shrink-0 text-center">1D</span>
      <span className="ml-[26px] w-[35px] shrink-0 text-center">5D</span>
      <span className="ml-[27px] w-[39px] shrink-0 text-center">1M</span>
      <span className="ml-[26px] w-[39px] shrink-0 text-center">3M</span>
      <span className="ml-[25px] w-[42px] shrink-0 text-center">6M</span>
      <span className="ml-[25px] w-[53px] shrink-0 text-center">YTD</span>
      <span className="ml-[27px] w-[32px] shrink-0 text-center">1Y</span>
      <span className="ml-[27px] w-[33px] shrink-0 text-center">5Y</span>
      <span className="ml-[26px] w-[30px] shrink-0 text-center">All</span>
      <Sep className="ml-[22px]" />
      <Ico w={40} h={40} className="ml-[24px]">
        <path d="M6 20V7H36V38H24M6 14H36M14 2V8M28 2V8" />
        <path d="M3 32H16M10 25L17 32L10 39" />
      </Ico>
      <span className="ml-auto mr-[20px] tracking-[0.5px]">14:54:24 UTC</span>
    </div>
  </div>
);

const BottomPanel = () => (
  <div className="mt-[8px] flex h-[76px] items-center whitespace-nowrap rounded-t-[8px] bg-[#0f0f0f] text-[26px] tracking-[0.5px] text-[#d8d8d8]">
    <span className="ml-[33.5px] w-[138px] shrink-0 text-center">Pine Editor</span>
    <span className="ml-[65px] w-[196px] shrink-0 text-center">Strategy Tester</span>
    <span className="ml-[66px] w-[189px] shrink-0 text-center">Replay Trading</span>
    <span className="ml-[65px] w-[173px] shrink-0 text-center">Trading Panel</span>
    <Ico w={36} h={18} className="ml-auto">
      <path d="M2 16L18 3L34 16" />
    </Ico>
    <Ico w={34} h={34} className="ml-[38px] mr-[22px]">
      <path d="M2 9V5Q2 2 5 2H29Q32 2 32 5V9M32 25V29Q32 32 29 32H5Q2 32 2 29V25" />
    </Ico>
  </div>
);

export default function App() {
  return (
    <div className="h-[2256px] w-[3776px] overflow-hidden bg-[#3e8ae2] pl-[184px] pt-[184px] font-['Inter',sans-serif] tabular-nums">
      <div className="flex h-[1886px] w-[3406px] flex-col overflow-hidden rounded-[36px] border-b-8 border-r-8 border-[#2b3d41] bg-[#2e2e2e] shadow-[0_10px_24px_rgba(10,30,70,0.45)]">
        <TopBar />
        <div className="mt-[8px] flex flex-1 gap-[8px]">
          <LeftRail />
          <div className="flex min-w-0 flex-1 flex-col">
            <Panel />
            <BottomPanel />
          </div>
          <RightRail />
        </div>
      </div>
    </div>
  );
}
